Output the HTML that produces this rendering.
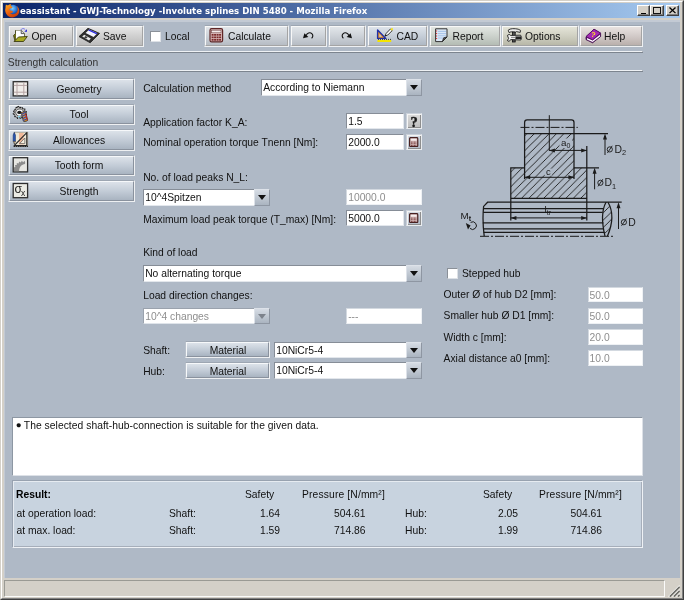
<!DOCTYPE html>
<html><head><meta charset="utf-8"><title>eassistant - GWJ-Technology -Involute splines DIN 5480</title>
<style>
html,body{margin:0;padding:0;}
body{width:684px;height:600px;overflow:hidden;background:#d4d0c8;position:relative;font-family:"Liberation Sans",Arial,sans-serif;font-size:10.3px;color:#111;}
#root{position:absolute;left:0;top:0;width:684px;height:600px;will-change:transform;}
.a{position:absolute;box-sizing:border-box;}
.t{position:absolute;white-space:nowrap;line-height:12px;height:12px;}
#frame{left:0;top:0;width:684px;height:600px;border:1px solid #d4d0c8;border-right-color:#404040;border-bottom-color:#404040;}
#frame2{left:1px;top:1px;width:682px;height:598px;border:1px solid #fff;border-right-color:#808080;border-bottom-color:#808080;}
#title{left:3px;top:3px;width:677px;height:15px;background:linear-gradient(90deg,#0a246a 0%,#a6caf0 100%);}
#title .t{left:17px;top:2px;color:#fff;font-family:"DejaVu Sans Condensed","DejaVu Sans",sans-serif;font-weight:bold;font-size:9.55px;}
#content{left:4px;top:20px;width:676px;height:558px;background:#afb9c6;border-left:1px solid #c3cad4;border-top:2px solid #c3cad4;}
.btn{border:1px solid;border-color:#f4f4f4 #8a8a8a #8a8a8a #f4f4f4;background:linear-gradient(#e9e9e9,#c4c4c4);}
.nav{border:1px solid;border-color:#f0f3f7 #7f8893 #7f8893 #f0f3f7;background:linear-gradient(#dde3ea,#a9b3c0);}
.inp{background:#fff;border:1px solid;border-color:#868d97 #e3e7ec #e3e7ec #868d97;}
.dis{color:#8e8e8e;}
.inp.dis{border-color:#d3d9e0 #eef1f4 #eef1f4 #d3d9e0;}
.inp.rc .t{left:0.6px;top:1.6px;}
.hl{height:2px;border-top:1px solid #eef1f4;border-bottom:1px solid #7c848e;border-right:1px solid #7c848e;}

.c{text-align:center;}
.inp .t{left:1.2px;top:2px;}
.sel .arr{position:absolute;right:-1px;top:-1px;bottom:-1px;width:16px;background:linear-gradient(#d6dce4,#aab4c0);border:1px solid;border-color:#dde2e9 #8e96a2 #8e96a2 #dde2e9;box-sizing:border-box;}
.sel .arr:after{content:"";position:absolute;left:2.5px;top:4.5px;border:4.5px solid transparent;border-top:5px solid #111;border-bottom:0;}
.dis .arr:after{border-top-color:#7d838c;}
.inp.sel.dis{border-color:#9aa2ad #dfe4ea #dfe4ea #9aa2ad;}
.sb{border:1px solid;border-color:#c9d0d9 #e9ecef #e9ecef #c9d0d9;background:linear-gradient(#dcdcdc,#bdbdbd);box-shadow:inset 1px 1px 0 #f4f4f4,inset -1px -1px 0 #8e8e8e;}
.sb.bl{background:linear-gradient(#d5dbe3,#b3bcc8);}
.sb svg{position:absolute;left:2.4px;top:1.6px;}
.q{left:0;width:14px;text-align:center;top:1.5px;font-family:"Liberation Serif",serif;font-weight:bold;font-size:14.5px;color:#1a1a1a;-webkit-text-stroke:0.45px #1a1a1a;}
#msg{background:#fff;border:1px solid;border-color:#8d97a3 #dde1e7 #dde1e7 #8d97a3;}
#res{background:#c8d3df;border:1px solid;border-color:#98a2b0 #eef1f5 #eef1f5 #98a2b0;box-shadow:inset 1px 1px 0 #e6ebf1,inset -1px -1px 0 #a6aeba;}
#status{background:#d4d0c8;}
#stpanel{border:1px solid;border-color:#9a9a94 #fbfbfa #fbfbfa #9a9a94;}

.bo{border:1px solid;border-color:#9da6b2 #eef0f2 #eef0f2 #b9c1cb;}
.bi{position:absolute;left:0;top:0;right:0;bottom:0;border:1px solid;border-color:#f8f8f8 #a4a4a4 #a4a4a4 #f8f8f8;}
.gn{background:linear-gradient(#dce2e9,#c3ccd7 50%,#a9b4c1);border-color:#f6f8fa #8a929e #8a929e #f6f8fa !important;}
.g0{background:linear-gradient(#e6e6e6,#d0d0d0 50%,#bcbcbc);}
.g1{background:linear-gradient(#e2e6ea,#cdd2d8 50%,#b6bcc4);}
.g2{background:linear-gradient(#dde3ea,#c6ced8 50%,#aeb8c4);}
.g3{background:linear-gradient(#e2e6e2,#ccd2cc 50%,#b4bcb4);}
.g4{background:linear-gradient(#e4e4d8,#d0d0c2 50%,#b8b8a8);}
.g5{background:linear-gradient(#e8e2e0,#d2cac8 50%,#bab0ac);}
.cb{background:#fff;border:1px solid;border-color:#8a9098 #dde1e6 #dde1e6 #8a9098;}

.wb{background:#d4d0c8;border:1px solid;border-color:#fff #404040 #404040 #fff;box-shadow:inset -1px -1px 0 #808080;}
</style></head><body>
<div id="root">
<div id="frame" class="a"></div><div id="frame2" class="a"></div>
<div id="title" class="a"><span class="t">eassistant - GWJ-Technology -Involute splines DIN 5480 - Mozilla Firefox</span></div>

<!-- firefox icon -->
<svg class="a" style="left:4.5px;top:4px" width="15" height="13.5" viewBox="0.6 0.8 13.8 12.6">
<defs><radialGradient id="gl" cx="0.45" cy="0.35" r="0.6"><stop offset="0" stop-color="#7fd0ff"/><stop offset="0.6" stop-color="#2a78d8"/><stop offset="1" stop-color="#123a90"/></radialGradient>
<linearGradient id="fx" x1="0" y1="0" x2="0.6" y2="1"><stop offset="0" stop-color="#ffb020"/><stop offset="0.5" stop-color="#f06a10"/><stop offset="1" stop-color="#c83c08"/></linearGradient></defs>
<circle cx="8" cy="6.4" r="5" fill="url(#gl)"/>
<path d="M1.4 1.2 C2.4 2 3 2.2 3.8 1.8 C4.6 1 5.6 0.8 6.4 1.4 C5.6 1.8 5.6 2.6 6.4 3 C7.2 3.4 7.8 4 7 4.6 C6 5 5 5 4.6 5.8 C4.6 7 6 7.4 7.4 7 C8.6 8.6 6.8 9.8 5.2 9 C6.4 11 10 10.8 11.6 8.6 C12.8 6.6 12.6 4.2 11.2 2.6 C13.6 3.8 14.8 7.2 13.2 10 C11.6 13 7.6 14.2 4.4 12.6 C1.2 11 0 7.6 1 4.6 C1 3.4 1 2.4 1.4 1.2 Z" fill="url(#fx)"/>
</svg>
<!-- window buttons -->
<div class="a wb" style="left:637px;top:5px;width:12.5px;height:11.4px"><i style="position:absolute;left:2.5px;top:6.8px;width:5.4px;height:1.7px;background:#000"></i></div>
<div class="a wb" style="left:650px;top:5px;width:13.5px;height:11.4px"><i style="position:absolute;left:2px;top:1.2px;width:7.6px;height:7px;border:1px solid #111;border-top-width:1.8px;box-sizing:border-box"></i></div>
<div class="a wb" style="left:665.5px;top:5px;width:13.5px;height:11.4px"><svg style="position:absolute;left:2.5px;top:1.4px" width="7" height="6.6" viewBox="0 0 7 7" preserveAspectRatio="none"><path d="M0.5 0.5 L6.5 6.5 M6.5 0.5 L0.5 6.5" stroke="#000" stroke-width="1.3"/></svg></div>
<div id="content" class="a"></div>

<!-- toolbar -->
<div id="toolbar">
<div class="a bo" style="left:8px;top:25px;width:66px;height:22px"><div class="bi g0"></div></div><span class="t" style="left:31.5px;top:30.8px">Open</span>
<div class="a bo" style="left:75px;top:25px;width:69px;height:22px"><div class="bi g0"></div></div><span class="t" style="left:103px;top:30.8px">Save</span>
<div class="a cb" style="left:150px;top:30.8px;width:11px;height:11px"></div><span class="t" style="left:165px;top:30.8px">Local</span>
<div class="a bo" style="left:204px;top:25px;width:85px;height:22px"><div class="bi g1"></div></div><span class="t" style="left:228px;top:30.8px">Calculate</span>
<div class="a bo" style="left:290px;top:25px;width:37px;height:22px"><div class="bi g1"></div></div>
<div class="a bo" style="left:328px;top:25px;width:38px;height:22px"><div class="bi g1"></div></div>
<div class="a bo" style="left:367px;top:25px;width:61px;height:22px"><div class="bi g2"></div></div><span class="t" style="left:396.5px;top:30.8px">CAD</span>
<div class="a bo" style="left:429px;top:25px;width:72px;height:22px"><div class="bi g3"></div></div><span class="t" style="left:452.5px;top:30.8px">Report</span>
<div class="a bo" style="left:501px;top:25px;width:78px;height:22px"><div class="bi g4"></div></div><span class="t" style="left:525px;top:30.8px">Options</span>
<div class="a bo" style="left:579px;top:25px;width:64px;height:22px"><div class="bi g5"></div></div><span class="t" style="left:604px;top:30.8px">Help</span>

<!-- Open icon -->
<svg class="a" style="left:12px;top:27px" width="17" height="16" viewBox="0 0 17 16">
<path d="M1.5 8.5 L3.5 6.5 L3.5 3.5 L9.5 3.5 L12.5 6.5 L12.5 10.5 L3 14 Z" fill="#6c6c18" stroke="#3a3a10" stroke-width="0.8"/>
<path d="M4 3.6 L9.2 3.6 L12.2 6.4 L12.2 10.5 L4 12 Z" fill="#fff"/>
<path d="M9.2 3.6 L9.2 6.6 L12.2 6.6" fill="#d8d8d8" stroke="#333" stroke-width="0.8"/>
<path d="M2 14.5 L6.5 10 L15.3 9.5 L11.5 14.5 Z" fill="#a9aa22" stroke="#3d3d10" stroke-width="0.9" stroke-linejoin="round"/>
<path d="M8.6 3.2 C9.6 1.2 12 1 13.2 2.6" fill="none" stroke="#7070e8" stroke-width="0.9"/>
<path d="M12.4 4.4 L15 2.2 L14.8 5 Z" fill="#2020d8"/>
</svg>

<!-- Save icon -->
<svg class="a" style="left:78px;top:27px" width="23" height="17" viewBox="0 0 23 17">
<path d="M10 1.3 L21.6 6.4 L12.2 15.8 L1 9.6 Z" fill="#2e2e2e" stroke="#1c1c1c" stroke-width="0.8" stroke-linejoin="round"/>
<path d="M11.2 2.6 L19.3 6.2 L15.6 10 L7.6 6 Z" fill="#f4f4ff"/>
<path d="M11.2 2.6 L19.3 6.2 L18.4 7.2 L10.2 3.6 Z" fill="#2a2ae0"/>
<path d="M4.2 9.4 L6.2 7.8 L12.8 11.6 L11 13.4 Z" fill="#e8e8e8"/>
<path d="M6 10.4 L7.6 9 L9.6 10.2 L8.2 11.6 Z" fill="#3a3a3a"/>
</svg>

<!-- Calculate icon -->
<svg class="a" style="left:209px;top:28px" width="15" height="15" viewBox="0 0 15 15">
<rect x="1" y="0.6" width="12.6" height="13.2" rx="1.6" fill="#d9b8b8" stroke="#5e2626" stroke-width="1.2"/>
<rect x="2.6" y="2.2" width="9.4" height="2.6" fill="#f4ecec" stroke="#6b3a3a" stroke-width="0.5"/>
<g fill="#7a2a2a"><rect x="2.6" y="6" width="2" height="1.7"/><rect x="5.1" y="6" width="2" height="1.7"/><rect x="7.6" y="6" width="2" height="1.7"/><rect x="10.1" y="6" width="2" height="1.7"/>
<rect x="2.6" y="8.5" width="2" height="1.7"/><rect x="5.1" y="8.5" width="2" height="1.7"/><rect x="7.6" y="8.5" width="2" height="1.7"/><rect x="10.1" y="8.5" width="2" height="1.7"/>
<rect x="2.6" y="11" width="2" height="1.7"/><rect x="5.1" y="11" width="2" height="1.7"/><rect x="7.6" y="11" width="2" height="1.7"/><rect x="10.1" y="11" width="2" height="1.7"/></g>
</svg>

<!-- Undo / Redo -->
<svg class="a" style="left:302px;top:31px" width="13" height="9" viewBox="0 0 13 9">
<path d="M4.2 4.6 C5 2 8 1 9.8 2.6 C11.4 4 11 6.2 9.6 7.2" fill="none" stroke="#111" stroke-width="1.1"/>
<path d="M1 7.2 L2.4 2.2 L6.4 6 Z" fill="#111"/>
</svg>
<svg class="a" style="left:340px;top:31px" width="13" height="9" viewBox="0 0 13 9">
<g transform="translate(13,0) scale(-1,1)"><path d="M4.2 4.6 C5 2 8 1 9.8 2.6 C11.4 4 11 6.2 9.6 7.2" fill="none" stroke="#111" stroke-width="1.1"/>
<path d="M1 7.2 L2.4 2.2 L6.4 6 Z" fill="#111"/></g>
</svg>

<!-- CAD icon -->
<svg class="a" style="left:376px;top:27px" width="18" height="16" viewBox="0 0 18 16">
<path d="M1.6 3 L1.6 11.4 L9.8 11.4 Z" fill="#e89020" stroke="#2030a8" stroke-width="1.4" stroke-linejoin="round"/>
<path d="M3.4 7 L3.4 9.8 L6 9.8 Z" fill="#c8d0e0"/>
<rect x="1.4" y="12.9" width="13.8" height="2.1" fill="#f4e400"/>
<path d="M2.5 12.9v-1 M4.5 12.9v-1 M6.5 12.9v-1 M8.5 12.9v-1 M10.5 12.9v-1 M12.5 12.9v-1 M14.5 12.9v-1" stroke="#222" stroke-width="0.9"/>
<path d="M9 9 L10.2 6.4 L14.4 2 L16.2 3.6 L11.8 8 Z" fill="#fff" stroke="#222" stroke-width="0.9" stroke-linejoin="round"/>
<path d="M14.2 2.2 L16 0.8 L17.2 2 L16 3.8 Z" fill="#f0e020"/>
<path d="M8.6 9.6 L9.4 7.8 L10.6 8.8 Z" fill="#111"/>
</svg>

<!-- Report icon -->
<svg class="a" style="left:434px;top:28px" width="15" height="15" viewBox="0 0 15 15">
<path d="M1.6 0.8 L13 0.8 L13 9 L8.4 13.6 L1.6 13.6 Z" fill="#dce8f6" stroke="#333" stroke-width="1"/>
<path d="M4 3.4h8 M4 5.6h8 M4 7.8h8 M4 10h5" stroke="#9fc0e8" stroke-width="0.9"/>
<path d="M2.6 2.4v10" stroke="#e03030" stroke-width="1.1" stroke-dasharray="1.2 1.3"/>
<path d="M8.4 13.6 L9.6 9.8 L13 9 Z" fill="#555" stroke="#222" stroke-width="0.8"/>
</svg>

<!-- Options icon -->
<svg class="a" style="left:506px;top:28px" width="17" height="15" viewBox="0 0 17 15">
<path d="M2.2 2.2 C4 0.2 9 0.4 12.2 1.2 L14.6 2.4 L14.2 4.4 L10.4 3.6 L9.6 4.4 L5 3.8 L3 4.6 Z" fill="#e8e8e8" stroke="#222" stroke-width="0.9" stroke-linejoin="round"/>
<rect x="6.4" y="4" width="2.8" height="10" fill="#555" stroke="#111" stroke-width="0.8"/>
<path d="M1.4 7.4 L3.2 6.4 L4.6 7.4 L14.6 7.2 L15.6 9.6 L14.8 12 L4.6 11.6 L3.2 13.4 L1.4 12.6 L2.6 10.4 Z" fill="#f0f0f0" stroke="#1a1a1a" stroke-width="0.9" stroke-linejoin="round"/>
<path d="M9.4 8.4 H15 V11 H9.4 Z" fill="#222"/>
<path d="M5 9.4h4" stroke="#888" stroke-width="1"/>
</svg>

<!-- Help icon -->
<svg class="a" style="left:585px;top:28px" width="17" height="16" viewBox="0 0 17 16">
<path d="M1 8.8 L9 1.2 L15.6 5.2 L15.6 8.6 L7.6 14.8 L1 11.6 Z" fill="#6a1478" stroke="#3a0a44" stroke-width="0.8" stroke-linejoin="round"/>
<path d="M2 10 L7.6 12.6 L15 6.8 L15 8.4 L7.6 14 L2 11.4 Z" fill="#fff"/>
<path d="M1 8.6 L9 1.2 L15.6 5 L7.6 11.8 Z" fill="#a428b4" stroke="#4a1058" stroke-width="0.7" stroke-linejoin="round"/>
<text x="8.2" y="9" font-family="Liberation Sans,sans-serif" font-weight="bold" font-size="7" fill="#ffe820" text-anchor="middle" transform="rotate(18 8.2 6.5)">?</text>
</svg>
</div>
<div class="a hl" style="left:8px;top:51px;width:635px"></div>
<span class="t" style="left:7.8px;top:56.6px;color:#333">Strength calculation</span>
<div class="a hl" style="left:8px;top:70px;width:635px"></div>

<!-- nav -->
<div id="nav">
<div class="a bo" style="left:8px;top:78px;width:127px;height:22px"><div class="bi gn"></div></div><span class="t c" style="left:28px;top:84.2px;width:102px">Geometry</span>
<div class="a bo" style="left:8px;top:104px;width:127px;height:21px"><div class="bi gn"></div></div><span class="t c" style="left:28px;top:109.2px;width:102px">Tool</span>
<div class="a bo" style="left:8px;top:129px;width:127px;height:22px"><div class="bi gn"></div></div><span class="t c" style="left:28px;top:135px;width:102px">Allowances</span>
<div class="a bo" style="left:8px;top:155px;width:127px;height:21px"><div class="bi gn"></div></div><span class="t c" style="left:28px;top:160.4px;width:102px">Tooth form</span>
<div class="a bo" style="left:8px;top:180px;width:127px;height:22px"><div class="bi gn"></div></div><span class="t c" style="left:28px;top:186px;width:102px">Strength</span>
</div>

<!-- nav icons -->
<svg class="a" style="left:12px;top:80px" width="17" height="17" viewBox="0 0 17 17">
<rect x="1.2" y="1.7" width="14.4" height="14.2" fill="#f1edea" stroke="#2e2e2e" stroke-width="1.3"/>
<path d="M5 2.4v13 M11.8 2.4v13 M1.8 5.4h13.4 M1.8 12.2h13.4" stroke="#b5a4a4" stroke-width="1"/>
</svg>
<svg class="a" style="left:12px;top:105px" width="18" height="18" viewBox="0 0 18 18">
<g fill="#b8b8b8" stroke="#1c1c1c" stroke-width="1.1" stroke-linejoin="round" stroke-dasharray="2.2 0.9">
<path d="M5 2.2 L7 1.2 L8 2.6 L10 2.2 L10.8 3.6 L12.8 3.8 L12.8 5.6 L14.4 6.6 L13.6 8.2 L14.4 9.8 L12.6 10.6 L12.2 12.4 L10.2 12.2 L9 13.6 L7.4 12.6 L5.6 13.4 L4.6 11.8 L2.8 11.6 L2.8 9.8 L1.2 8.8 L2.2 7.2 L1.4 5.6 L3.2 4.8 L3.4 3 Z"/>
</g>
<path d="M4.6 5.2 C6 3.6 9.6 3.6 11 5.4 C12 7 11.4 9.8 9.6 10.8 C7.4 11.8 4.8 10.8 4 8.8 C3.6 7.4 3.8 6.2 4.6 5.2 Z" fill="#f6f6f6" stroke="#333" stroke-width="0.7"/>
<ellipse cx="7.4" cy="7.4" rx="2.2" ry="1.7" fill="#1a1a1a"/>
<ellipse cx="7.2" cy="11.6" rx="1.4" ry="0.9" fill="#8ad8f0"/>
<g transform="rotate(-14 12.5 12)">
<rect x="10.4" y="6.8" width="4.4" height="9.6" rx="1" fill="#f0a020" stroke="#222" stroke-width="0.7"/>
<path d="M10.6 8.6 L14.6 7.6 M10.6 10.8 L14.6 9.8 M10.6 13 L14.6 12 M10.6 15.2 L14.6 14.2" stroke="#2040c0" stroke-width="1.1"/>
<path d="M14.4 9 V16" stroke="#c02020" stroke-width="0.9"/>
</g>
</svg>
<svg class="a" style="left:12px;top:131px" width="17" height="17" viewBox="0 0 17 17">
<rect x="2.4" y="1.2" width="13.4" height="14" fill="#efe8d6" stroke="#8a8474" stroke-width="0.6"/>
<rect x="7" y="2" width="4.6" height="11.4" fill="#f0b898"/>
<path d="M2.2 14.6 L14.8 1.6 L14.8 14.6 Z" fill="none" stroke="#2a2a2a" stroke-width="1.2" stroke-linejoin="round"/>
<path d="M7.6 12.6 L12.8 7 L12.8 12.6 Z" fill="#f6f0e0" stroke="#555" stroke-width="0.7"/>
<path d="M1.6 15.4 H16" stroke="#222" stroke-width="1.3" stroke-dasharray="1.4 0.8"/>
<path d="M1.2 4 L2.2 1.4 L3.4 4 L3.4 10.4 L1.2 10.4 Z" fill="#2858b8" stroke="#102a60" stroke-width="0.6"/>
<path d="M1.2 10.4 L3.4 10.4 L2.3 13 Z" fill="#e8c898" stroke="#333" stroke-width="0.5"/>
</svg>
<svg class="a" style="left:12px;top:156px" width="17" height="17" viewBox="0 0 17 17">
<rect x="1.2" y="1.7" width="14.4" height="14.2" fill="#e6e6e2" stroke="#2e2e2e" stroke-width="1.3"/>
<path d="M2 15.2 L2 11.4 L3.4 10.8 L3 9 L4.8 9 L4.8 7 L6.6 7.6 L7.2 5.6 L8.8 6.6 L9.8 4.8 L11.2 6.2 L12.6 4.8 L13.2 6.6 L13 8 C9.6 8.4 7.4 10.8 7 15.2 Z" fill="#8c8c8c"/>
</svg>
<svg class="a" style="left:12px;top:182px" width="17" height="17" viewBox="0 0 17 17">
<rect x="1.2" y="1.5" width="14.4" height="14.2" fill="#ebebe4" stroke="#2e2e2e" stroke-width="1.3"/>
<text x="2.4" y="11.4" font-family="Liberation Sans,sans-serif" font-size="12" fill="#222">σ</text>
<text x="9" y="14.2" font-family="Liberation Sans,sans-serif" font-size="8.5" fill="#222">x</text>
</svg>

<!-- form -->
<span class="t" style="left:143.2px;top:82.5px">Calculation method</span>
<div class="a inp sel" style="left:261px;top:79px;width:161px;height:17px"><span class="t">According to Niemann</span><i class="arr"></i></div>

<span class="t" style="left:143.2px;top:116.5px">Application factor K_A:</span>
<div class="a inp" style="left:346px;top:113px;width:58px;height:16px"><span class="t">1.5</span></div>
<div class="a sb" style="left:406px;top:113px;width:16px;height:16px"><span class="t q">?</span></div>

<span class="t" style="left:143.2px;top:137px">Nominal operation torque Tnenn [Nm]:</span>
<div class="a inp" style="left:346px;top:134px;width:58px;height:16px"><span class="t">2000.0</span></div>
<div class="a sb bl" style="left:406px;top:134px;width:16px;height:16px"><svg width="9.4" height="10.2" viewBox="0 0 10 11"><rect x="0.6" y="0.6" width="8.8" height="9.8" rx="1.2" fill="#dcc4c4" stroke="#472020" stroke-width="1.3"/><rect x="2" y="2" width="6" height="1.9" fill="#f6eeee"/><path d="M2 5.5h6 M2 7.3h6 M2 9.1h6" stroke="#6a2a2a" stroke-width="1" stroke-dasharray="1.1 0.5"/></svg></div>

<span class="t" style="left:143.2px;top:171.5px">No. of load peaks N_L:</span>
<div class="a inp sel" style="left:143px;top:189px;width:127px;height:17px"><span class="t">10^4Spitzen</span><i class="arr"></i></div>
<div class="a inp dis" style="left:346px;top:189px;width:76px;height:16px"><span class="t">10000.0</span></div>

<span class="t" style="left:143.2px;top:214.2px">Maximum load peak torque (T_max) [Nm]:</span>
<div class="a inp" style="left:346px;top:210px;width:58px;height:16px"><span class="t">5000.0</span></div>
<div class="a sb bl" style="left:406px;top:210px;width:16px;height:16px"><svg width="9.4" height="10.2" viewBox="0 0 10 11"><rect x="0.6" y="0.6" width="8.8" height="9.8" rx="1.2" fill="#dcc4c4" stroke="#472020" stroke-width="1.3"/><rect x="2" y="2" width="6" height="1.9" fill="#f6eeee"/><path d="M2 5.5h6 M2 7.3h6 M2 9.1h6" stroke="#6a2a2a" stroke-width="1" stroke-dasharray="1.1 0.5"/></svg></div>

<span class="t" style="left:143.2px;top:247px">Kind of load</span>
<div class="a inp sel" style="left:143px;top:265px;width:279px;height:17px"><span class="t">No alternating torque</span><i class="arr"></i></div>

<span class="t" style="left:143.2px;top:290px">Load direction changes:</span>
<div class="a inp sel dis" style="left:143px;top:308px;width:127px;height:16px"><span class="t">10^4 changes</span><i class="arr"></i></div>
<div class="a inp dis" style="left:346px;top:308px;width:76px;height:16px"><span class="t">---</span></div>

<span class="t" style="left:143.2px;top:344.5px">Shaft:</span>
<div class="a bo" style="left:185px;top:341px;width:85px;height:17px"><div class="bi gn"></div></div><span class="t c" style="left:185.5px;top:344.8px;width:85px">Material</span>
<div class="a inp sel" style="left:274px;top:342px;width:148px;height:16px"><span class="t">10NiCr5-4</span><i class="arr"></i></div>

<span class="t" style="left:143.2px;top:365.5px">Hub:</span>
<div class="a bo" style="left:185px;top:362px;width:85px;height:17px"><div class="bi gn"></div></div><span class="t c" style="left:185.5px;top:365.8px;width:85px">Material</span>
<div class="a inp sel" style="left:274px;top:362px;width:148px;height:17px"><span class="t">10NiCr5-4</span><i class="arr"></i></div>

<!-- right column -->
<div class="a cb" style="left:447px;top:268px;width:11px;height:11px"></div><span class="t" style="left:462px;top:267.5px">Stepped hub</span>
<span class="t" style="left:443.6px;top:289px">Outer Ø of hub D2 [mm]:</span>
<div class="a inp dis rc" style="left:588px;top:287px;width:55px;height:15px"><span class="t">50.0</span></div>
<span class="t" style="left:443.6px;top:310px">Smaller hub Ø D1 [mm]:</span>
<div class="a inp dis rc" style="left:588px;top:308px;width:55px;height:16px"><span class="t">50.0</span></div>
<span class="t" style="left:443.6px;top:331.5px">Width c [mm]:</span>
<div class="a inp dis rc" style="left:588px;top:329px;width:55px;height:16px"><span class="t">20.0</span></div>
<span class="t" style="left:443.6px;top:353px">Axial distance a0 [mm]:</span>
<div class="a inp dis rc" style="left:588px;top:350px;width:55px;height:16px"><span class="t">10.0</span></div>


<!-- diagram -->
<svg class="a" style="left:456px;top:108px" width="190" height="140" viewBox="456 108 190 140" font-family="Liberation Sans,sans-serif" fill="#1a1a1a">
<defs><pattern id="hat" width="7.4" height="7.4" patternUnits="userSpaceOnUse" x="2" y="0"><path d="M-1 8.4 L8.4 -1 M-1 1 L1 -1 M6.4 8.4 L8.4 6.4" stroke="#1a1a1a" stroke-width="0.9"/></pattern></defs>
<!-- hatched hub -->
<path d="M524.6 133.6 H574 V167.8 H586.8 V198.3 H510.8 V167.8 H524.6 Z" fill="url(#hat)"/>
<rect x="559.5" y="138.5" width="12.5" height="9.5" fill="#afb9c6"/>
<rect x="544.5" y="168.6" width="7.5" height="7" fill="#afb9c6"/>
<g fill="none" stroke="#1a1a1a" stroke-width="1.25">
<path d="M524.6 179 V122.4 Q524.6 119.9 527.1 119.9 H571.5 Q574 119.9 574 122.4 V179"/>
<path d="M524.6 133.6 H608"/>
<path d="M524.6 167.8 H510.8 V220.5 M510.8 198.3 H586.8 M574 167.8 H599 M586.8 146 V220.5"/>
<!-- shaft -->
<path d="M621.7 202.2 H487.6 L483.6 206.4 Q482.2 221 484.2 236.2" />
<path d="M483.6 208.5 H603 M483.2 212.3 H602.7 M482.8 222.8 H603.4 M483.2 228.9 H604 M483.6 232.3 H604.6"/>
<path d="M606 202.2 Q599.6 214 605 236.2 M608 202.2 Q616 216 607.4 236.2"/>
</g>
<path d="M606 202.2 Q599.6 214 605 236.2 H607.4 Q616 216 608 202.2 Z" fill="url(#hat)"/>
<g fill="none" stroke="#1a1a1a" stroke-width="1">
<path d="M549.3 115.2 V151"/>
<path d="M520.5 127.4 H577.8" stroke-dasharray="9 2 2 2"/>
<path d="M480 236.3 H613" stroke-dasharray="9 2 2 2"/>
<path d="M549.3 150.4 H586.8 M524.6 177.3 H574 M510.8 217.9 H586.8"/>
<path d="M605 136 V155 M594.6 170 V189.3 M618.5 205 V229"/>
</g>
<!-- arrowheads -->
<path d="M549.3 150.4 l5.6 -2 v4 Z M586.8 150.4 l-5.6 -2 v4 Z"/>
<path d="M524.6 177.3 l5.6 -2 v4 Z M574 177.3 l-5.6 -2 v4 Z"/>
<path d="M510.8 217.9 l5.6 -2 v4 Z M586.8 217.9 l-5.6 -2 v4 Z"/>
<path d="M605 133.6 l-2 6 h4 Z M594.6 167.8 l-2 6 h4 Z M618.5 202.2 l-2 6 h4 Z"/>
<!-- labels -->
<text x="561" y="146" font-size="9.8">a<tspan dy="2.2" font-size="7">0</tspan></text>
<text x="546" y="175" font-size="9.4">c</text>
<text x="544.6" y="213" font-size="9.8">l<tspan dy="2.2" font-size="7">tr</tspan></text>
<text x="614.6" y="152.8" font-size="10.4">D<tspan dy="2.6" font-size="7.4">2</tspan></text>
<text x="604.6" y="186.2" font-size="10.4">D<tspan dy="2.6" font-size="7.4">1</tspan></text>
<text x="628.3" y="225.6" font-size="10.4">D</text>
<g fill="none" stroke="#1a1a1a" stroke-width="0.9">
<circle cx="609.8" cy="149.4" r="2.6"/><path d="M607.4 153 L612.2 145.8"/>
<circle cx="600.4" cy="182.8" r="2.6"/><path d="M598 186.4 L602.8 179.2"/>
<circle cx="623.9" cy="222.2" r="2.6"/><path d="M621.5 225.8 L626.3 218.6"/>
</g>
<text x="460.6" y="219" font-size="9.8">M<tspan dy="1.6" font-size="7.2" font-weight="bold">t</tspan></text>
<path d="M470.6 222.4 A3.8 3.8 0 1 1 470 228.4" fill="none" stroke="#1a1a1a" stroke-width="1"/>
<path d="M465.8 223 L470.6 225.6 L468 229.6 Z"/>
</svg>

<!-- message box -->
<div class="a" id="msg" style="left:12px;top:417px;width:631px;height:59px"></div>
<span class="t" style="left:15.7px;top:419.4px;font-size:9.8px;">●</span><span class="t" style="left:23.8px;top:419.5px;letter-spacing:0.046px">The selected shaft-hub-connection is suitable for the given data.</span>

<!-- result -->
<div class="a" id="res" style="left:12px;top:480px;width:631px;height:68px"></div>
<span class="t" style="left:16px;top:488.7px;font-weight:bold;color:#000">Result:</span>
<span class="t" style="left:245px;top:488.7px">Safety</span>
<span class="t" style="left:302px;top:488.7px;letter-spacing:0.14px">Pressure [N/mm²]</span>
<span class="t" style="left:483px;top:488.7px">Safety</span>
<span class="t" style="left:539px;top:488.7px;letter-spacing:0.14px">Pressure [N/mm²]</span>
<span class="t" style="left:16.5px;top:508px">at operation load:</span>
<span class="t" style="left:169px;top:508px">Shaft:</span>
<span class="t" style="left:260px;top:508px">1.64</span>
<span class="t" style="left:334px;top:508px">504.61</span>
<span class="t" style="left:405px;top:508px">Hub:</span>
<span class="t" style="left:498px;top:508px">2.05</span>
<span class="t" style="left:570.5px;top:508px">504.61</span>
<span class="t" style="left:16.5px;top:525px">at max. load:</span>
<span class="t" style="left:169px;top:525px">Shaft:</span>
<span class="t" style="left:260px;top:525px">1.59</span>
<span class="t" style="left:334px;top:525px">714.86</span>
<span class="t" style="left:405px;top:525px">Hub:</span>
<span class="t" style="left:498px;top:525px">1.99</span>
<span class="t" style="left:570.5px;top:525px">714.86</span>

<!-- status bar -->
<div class="a" id="status" style="left:4px;top:578px;width:676px;height:19px"></div>
<div class="a" id="stpanel" style="left:4px;top:580px;width:661px;height:17px"></div>
<svg class="a" style="left:667px;top:584px" width="13" height="13" viewBox="0 0 13 13">
<path d="M1.6 12.6 L12.6 1.6 M5.6 12.6 L12.6 5.6 M9.6 12.6 L12.6 9.6" stroke="#fff" stroke-width="1.2"/>
<path d="M2.8 12.6 L12.6 2.8 M6.8 12.6 L12.6 6.8 M10.8 12.6 L12.6 10.8" stroke="#6a6a66" stroke-width="1.5"/>
</svg>

</div>
</body></html>
